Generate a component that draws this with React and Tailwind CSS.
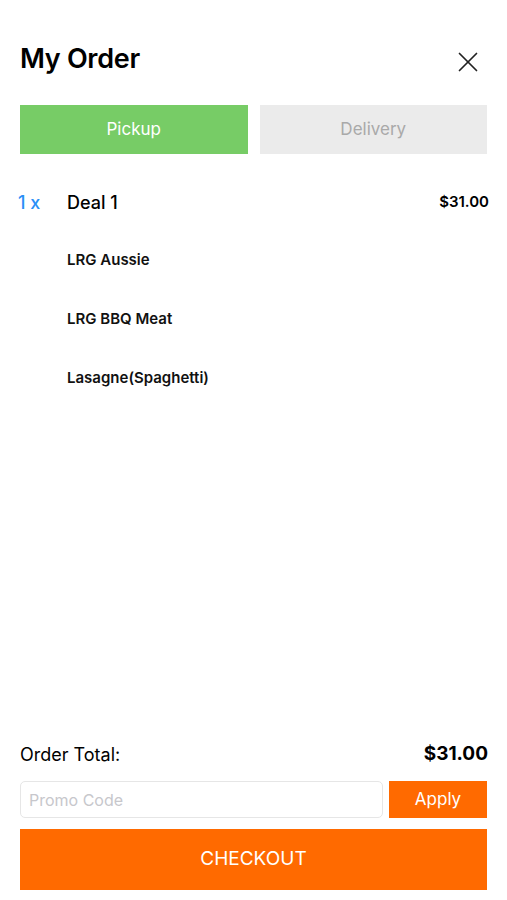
import { X } from 'lucide-react';

const items = ['LRG Aussie', 'LRG BBQ Meat', 'Lasagne(Spaghetti)'];

const App = () => {
  return (
    <div className="h-screen w-full bg-white flex flex-col px-5 text-black" style={{ fontFamily: 'Inter, Roboto, "Liberation Sans", sans-serif' }}>
      <div className="flex items-center justify-between mt-[42px] h-[34px]">
        <h1 className="text-[27px] font-semibold tracking-[-0.3px]">My Order</h1>
        <button className="mr-[2px] mt-[6px]">
          <X className="w-[34px] h-[34px] text-[#222]" strokeWidth={1.2} />
        </button>
      </div>

      <div className="flex gap-3 mt-[29px]">
        <button className="flex-1 h-[49px] bg-[#77cc66] text-white text-[17px]">Pickup</button>
        <button className="flex-1 h-[49px] bg-[#ebebeb] text-[#a9a9a9] text-[17px]">Delivery</button>
      </div>

      <div className="flex items-center mt-[34px] h-[28px]">
        <span className="w-[49px] -ml-[2px] text-[18px] font-medium text-[#2a8ff7]">1 x</span>
        <span className="flex-1 text-[18px] font-medium">Deal 1</span>
        <span className="text-[15px] font-semibold mr-[-2px]">$31.00</span>
      </div>

      <div className="flex flex-col pl-[47px]">
        {items.map(it => (
          <div key={it} className="h-[59px] flex items-center pt-[1px] text-[15px] font-semibold text-[#111] first:mt-[14px]">{it}</div>
        ))}
      </div>

      <div className="flex-1" />

      <div className="flex items-center justify-between h-[28px]">
        <span className="text-[18px]">Order Total:</span>
        <span className="text-[19px] font-bold mr-[-1px]">$31.00</span>
      </div>

      <div className="flex gap-[6px] mt-[13px]">
        <input placeholder="Promo Code" className="flex-1 h-[37px] border border-[#e6e6e6] rounded-[5px] px-2 text-[16px] placeholder:text-[#c7c7cc] outline-none" />
        <button className="w-[98px] h-[37px] bg-[#ff6a00] text-white text-[17px]">Apply</button>
      </div>

      <button className="mt-[11px] mb-[10px] h-[61px] bg-[#ff6a00] text-white text-[19px]">CHECKOUT</button>
    </div>
  );
};

export default App;
